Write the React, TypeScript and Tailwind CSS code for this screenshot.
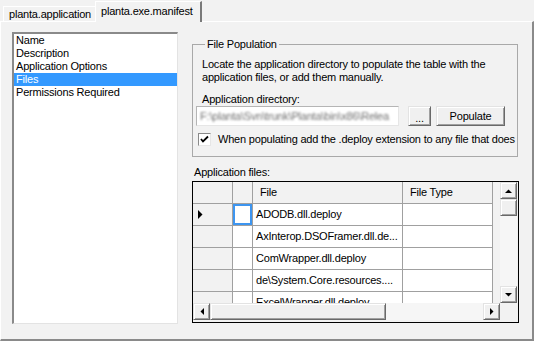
import React from "react";

const items = ["Name", "Description", "Application Options", "Files", "Permissions Required"];

const rows = [
  "ADODB.dll.deploy",
  "AxInterop.DSOFramer.dll.de...",
  "ComWrapper.dll.deploy",
  "de\\System.Core.resources....",
  "ExcelWrapper.dll.deploy",
];

function Btn3D({ className = "", children }: { className?: string; children?: React.ReactNode }) {
  return (
    <div
      className={
        "flex items-center justify-center bg-[#f0f0f0] border border-t-[#e3e3e3] border-l-[#e3e3e3] border-r-[#696969] border-b-[#696969] shadow-[inset_1px_1px_0_#ffffff,inset_-1px_-1px_0_#a0a0a0] " +
        className
      }
    >
      {children}
    </div>
  );
}

function Arrow({ dir }: { dir: "up" | "down" | "left" | "right" }) {
  const pts: Record<string, string> = {
    up: "0,4 7,4 3.5,0.5",
    down: "0,0 7,0 3.5,3.5",
    left: "4,0 4,7 0.5,3.5",
    right: "0,0 0,7 3.5,3.5",
  };
  const vert = dir === "up" || dir === "down";
  return (
    <svg width={vert ? 7 : 4} height={vert ? 4 : 7} viewBox={vert ? "0 0 7 4" : "0 0 4 7"}>
      <polygon points={pts[dir]} fill="#000" />
    </svg>
  );
}

export default function App() {
  return (
    <div className="w-[534px] h-[341px] overflow-hidden bg-[#f2f2f2] font-['Liberation_Sans',Arial,sans-serif] text-[11px] leading-[13px] tracking-[-0.2px] text-black flex flex-col">
      {/* Tabs */}
      <div className="h-[21px] flex items-end pl-[3px] relative z-10 shrink-0">
        <div className="h-[15px] w-[92px] bg-[#f2f2f2] border-t border-l border-white flex items-center pl-[5px] whitespace-nowrap">
          planta.application
        </div>
        <div className="h-[21px] w-[107px] -mb-px bg-[#f2f2f2] border-t border-l border-white border-r-2 border-r-[#7a7a7a] flex items-start pt-[3px] pl-[5px] whitespace-nowrap">
          planta.exe.manifest
        </div>
      </div>

      {/* Tab page */}
      <div className="flex-1 min-h-0 border-t border-l border-white border-r-2 border-b-2 border-r-[#8a8a8a] border-b-[#8a8a8a] flex pt-[10px] pl-[11px] gap-[14px]">
        {/* List */}
        <div className="w-[166px] h-[292px] shrink-0 bg-white border-l-2 border-t-2 border-l-[#8a8a8a] border-t-[#8a8a8a] border-r border-b border-r-[#e3e3e3] border-b-[#e3e3e3]">
          {items.map((it, i) => (
            <div
              key={it}
              className={
                "h-[13px] pl-[2px] whitespace-nowrap " + (i === 3 ? "bg-[#3399ff] text-white" : "")
              }
            >
              {it}
            </div>
          ))}
        </div>

        {/* Right column */}
        <div className="w-[327px] shrink-0 flex flex-col">
          <fieldset className="mt-[6px] w-[326px] border border-[#a9a9a9] pl-[3px] pr-0 pb-[10px]">
            <legend className="ml-[9px] px-[2px] h-[13px]">File Population</legend>
            <div className="pl-[6px] pt-[7px]">
              Locate the application directory to populate the table with the
              <br />
              application files, or add them manually.
            </div>
            <div className="pl-[6px] mt-[9px]">Application directory:</div>
            <div className="flex items-center h-[20px]">
              <div className="w-[203px] h-[20px] bg-white border border-t-[#b5b5b5] border-l-[#b5b5b5] border-r-[#e6e6e6] border-b-[#e6e6e6] overflow-hidden flex items-center pl-[3px]">
                <span className="blur-[1.3px] text-[#707070] whitespace-nowrap">
                  F:\planta\Svn\trunk\Planta\bin\x86\Relea
                </span>
              </div>
              <Btn3D className="ml-[9px] w-[23px] h-[20px]">
                <span className="leading-none pt-[4px]">...</span>
              </Btn3D>
              <Btn3D className="ml-[5px] w-[69px] h-[20px]">Populate</Btn3D>
            </div>
            <div className="flex items-center mt-[7px] h-[13px] overflow-hidden">
              <div className="ml-[2px] w-[13px] h-[13px] shrink-0 bg-white border border-t-[#8a8a8a] border-l-[#8a8a8a] border-r-[#e6e6e6] border-b-[#e6e6e6] flex items-center justify-center">
                <svg width="9" height="9" viewBox="0 0 9 9">
                  <polyline points="1,4 3,6.5 8,1.5" fill="none" stroke="#000" strokeWidth="1.8" />
                </svg>
              </div>
              <span className="ml-[7px] whitespace-nowrap">
                When populating add the .deploy extension to any file that does
              </span>
            </div>
          </fieldset>

          <div className="mt-[9px] pl-[2px] h-[13px]">Application files:</div>

          {/* Grid */}
          <div className="mt-[2px] w-[327px] h-[142px] border border-black bg-[#f2f2f2] flex">
            <div className="w-[307px] flex flex-col">
              <div className="h-[121px] overflow-hidden">
                <div className="grid grid-cols-[40px_20px_150px_90px_7px] auto-rows-[22px]">
                  {/* header */}
                  <div className="border-r border-b border-[#a0a0a0]" />
                  <div className="border-r border-b border-[#a0a0a0]" />
                  <div className="border-r border-b border-[#a0a0a0] flex items-center pl-[7px]">File</div>
                  <div className="border-r border-b border-[#a0a0a0] flex items-center pl-[7px]">File Type</div>
                  <div />
                  {rows.map((r, i) => (
                    <React.Fragment key={r}>
                      <div className="border-r border-b border-[#a0a0a0] flex items-center pl-[5px]">
                        {i === 0 && (
                          <svg width="5" height="9" viewBox="0 0 5 9">
                            <polygon points="0,0 0,9 4.5,4.5" fill="#000" />
                          </svg>
                        )}
                      </div>
                      <div
                        className={
                          "bg-white border-r border-b border-[#a0a0a0] " +
                          (i === 0 ? "shadow-[inset_0_0_0_2px_#3d95f0]" : "")
                        }
                      />
                      <div className="bg-white border-r border-b border-[#a0a0a0] flex items-center pl-[3px] whitespace-nowrap overflow-hidden">
                        {r}
                      </div>
                      <div className="bg-white border-r border-b border-[#a0a0a0]" />
                      <div />
                    </React.Fragment>
                  ))}
                </div>
              </div>
              {/* horizontal scrollbar */}
              <div className="h-[17px] flex">
                <Btn3D className="w-[17px] h-[17px]">
                  <Arrow dir="left" />
                </Btn3D>
                <Btn3D className="w-[176px] h-[17px]" />
                <div className="flex-1 bg-[#f6f6f6]" />
                <Btn3D className="w-[17px] h-[17px]">
                  <Arrow dir="right" />
                </Btn3D>
              </div>
            </div>
            {/* vertical scrollbar */}
            <div className="w-[17px] flex flex-col">
              <div className="h-[121px] flex flex-col">
                <Btn3D className="w-[17px] h-[17px]">
                  <Arrow dir="up" />
                </Btn3D>
                <Btn3D className="w-[17px] h-[17px]" />
                <div className="flex-1 bg-[#f6f6f6]" />
                <Btn3D className="w-[17px] h-[17px]">
                  <Arrow dir="down" />
                </Btn3D>
              </div>
            </div>
          </div>
        </div>
      </div>
    </div>
  );
}
